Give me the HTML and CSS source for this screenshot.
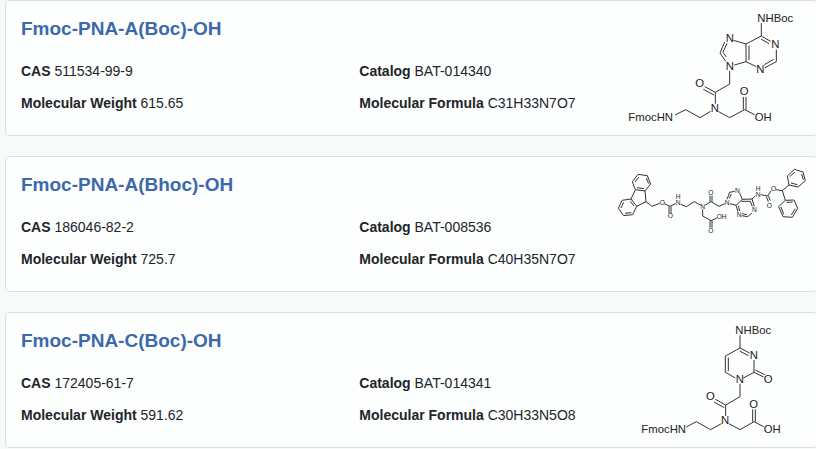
FILE: index.html
```
<!DOCTYPE html>
<html lang="en">
<head>
  <meta charset="UTF-8">
  <meta name="viewport" content="width=device-width, initial-scale=1.0">
  <title>PNA Monomers</title>
  <link rel="stylesheet" href="styles.css">
</head>
<body>

  <main class="product-list">
    <!-- Fmoc-PNA-A(Boc)-OH -->
    <article class="product">
      <div class="product-info">
        <h2><a href="#bat-014340">Fmoc-PNA-A(Boc)-OH</a></h2>
        <div class="product-data">
          <p><strong>CAS</strong> 511534-99-9</p>
          <p><strong>Catalog</strong> BAT-014340</p>
          <p><strong>Molecular Weight</strong> 615.65</p>
          <p><strong>Molecular Formula</strong> C31H33N7O7</p>
        </div>
      </div>
      <svg class="structure" viewBox="-9 3 612 402" role="img" aria-label="Structure of Fmoc-PNA-A(Boc)-OH">
        <path d="M436 69V108L390 132V185L421 200M436 108L464 124M435 117L459 131M399 137V180M390 132L353 121M326 126L312 159L329 184M333 130L321 157L331 171M390 185L355 195M447 203L481 185V149M445 194L473 178M341 212V252L298 277V311M298 277L266 260M294 285L262 268M284 334L252 353L209 329L177 345M308 335L341 353L386 329L416 344M382 329V291M390 329V291"/>
        <text x="424" y="66">NHBoc</text>
        <text x="329" y="127">N</text>
        <text x="466" y="143">N</text>
        <text x="329" y="210">N</text>
        <text x="421" y="219">N</text>
        <text x="238" y="262">O</text>
        <text x="371" y="286">O</text>
        <text x="284" y="336">N</text>
        <text x="416" y="363">OH</text>
        <text x="37" y="363">FmocHN</text>
      </svg>
    </article>

    <!-- Fmoc-PNA-A(Bhoc)-OH -->
    <article class="product">
      <div class="product-info">
        <h2><a href="#bat-008536">Fmoc-PNA-A(Bhoc)-OH</a></h2>
        <div class="product-data">
          <p><strong>CAS</strong> 186046-82-2</p>
          <p><strong>Catalog</strong> BAT-008536</p>
          <p><strong>Molecular Weight</strong> 725.7</p>
          <p><strong>Molecular Formula</strong> C40H35N7O7</p>
        </div>
      </div>
      <svg class="structure structure-small" viewBox="-9 6 612 402" role="img" aria-label="Structure of Fmoc-PNA-A(Bhoc)-OH">
        <!-- fluorenyl group -->
        <path d="M58 104L49 80L66 58L94 62L104 87L87 108ZM57 81L69 66M91 69L98 86M84 101L63 98"/>
        <path d="M45 132L18 136L7 160L23 182L50 179L62 154ZM23 142L15 159M27 175L46 173M54 153L43 139"/>
        <path d="M58 104L45 132M87 108L90 140L62 154M90 140L108 154L131 145"/>
        <!-- carbamate and backbone -->
        <path d="M145 146L162 154L179 146M159 154V175M165 154V175M194 148L211 155L235 140L253 150M268 150L285 140L309 154L326 146M282 140V122M288 140V122M260 163V183L285 197L303 189M282 197V218M288 197V218"/>
        <!-- adenine -->
        <path d="M333 133L341 112L356 109M340 130L346 117M371 114L379 133L360 151L342 146M379 133L408 132L415 154M376 139L403 139M360 151L366 170M367 152L371 168M377 182L395 185L408 174M379 176L393 179M408 132L418 123M409 154L403 139"/>
        <!-- benzhydryl ester -->
        <path d="M434 119L454 123L466 107M451 125L457 140M457 122L463 137M480 104L499 107L519 90M499 107L508 136"/>
        <path d="M519 90L514 63L535 43L561 51L568 77L546 96ZM521 65L537 51M557 57L562 74M544 89L525 84"/>
        <path d="M508 136L534 135L545 160L529 187L501 185L488 155ZM511 142L530 141M538 161L526 180M503 178L495 156"/>
        <text x="131" y="149">O</text>
        <text x="155" y="190">O</text>
        <text x="179" y="131">H</text>
        <text x="179" y="149">N</text>
        <text x="253" y="162">N</text>
        <text x="277" y="120">O</text>
        <text x="277" y="234">O</text>
        <text x="302" y="191">OH</text>
        <text x="326" y="149">N</text>
        <text x="357" y="115">N</text>
        <text x="362" y="187">N</text>
        <text x="408" y="172">N</text>
        <text x="419" y="107">H</text>
        <text x="419" y="125">N</text>
        <text x="465" y="109">O</text>
        <text x="452" y="158">O</text>
      </svg>
    </article>

    <!-- Fmoc-PNA-C(Boc)-OH -->
    <article class="product">
      <div class="product-info">
        <h2><a href="#bat-014341">Fmoc-PNA-C(Boc)-OH</a></h2>
        <div class="product-data">
          <p><strong>CAS</strong> 172405-61-7</p>
          <p><strong>Catalog</strong> BAT-014341</p>
          <p><strong>Molecular Weight</strong> 591.62</p>
          <p><strong>Molecular Formula</strong> C30H33N5O8</p>
        </div>
      </div>
      <svg class="structure" viewBox="-39 3 612 402" role="img" aria-label="Structure of Fmoc-PNA-C(Boc)-OH">
        <path d="M342 70V108L298 132V181L328 198M307 137V177M342 108L371 123M341 117L367 131M384 144V181L352 198M384 181L413 195M388 174L416 188M342 215V254L299 279V312M299 279L268 262M295 287L264 270M286 335L254 353L211 329L181 345M309 335L342 353L384 329L413 344M380 329V292M388 329V292"/>
        <text x="328" y="66">NHBoc</text>
        <text x="371" y="140">N</text>
        <text x="329" y="214">N</text>
        <text x="413" y="214">O</text>
        <text x="240" y="263">O</text>
        <text x="370" y="287">O</text>
        <text x="285" y="336">N</text>
        <text x="413" y="363">OH</text>
        <text x="46" y="363">FmocHN</text>
      </svg>
    </article>
  </main>

</body>
</html>
```
FILE: styles.css
```
* {
  margin: 0;
  padding: 0;
  box-sizing: border-box;
}

body {
  font-family: "Liberation Sans", Arial, sans-serif;
  font-size: 14px;
  color: #212529;
  background-color: #f8f9f9;
  overflow: hidden;
}

.product-list {
  display: flex;
  flex-direction: column;
  gap: 20px;
  margin-left: 5px;
  margin-right: -2px;
}

.product {
  display: flex;
  background-color: #fdfefe;
  border: 1px solid #dcdddd;
  border-radius: 5px;
}

.product-info {
  flex: 1;
  padding: 16px 0 16px 15px;
}

h2 {
  margin-bottom: 14px;
  font-size: 19px;
  line-height: 24px;
}

h2 a {
  color: #3c69ac;
  text-decoration: none;
}

h2 a:hover {
  text-decoration: underline;
}

.product-data {
  display: grid;
  grid-template-columns: 4fr 3fr;
  line-height: 32px;
}

.structure {
  flex: none;
  width: 204px;
  height: 134px;
}

.structure path {
  fill: none;
  stroke: #333;
  stroke-width: 3;
  stroke-linejoin: round;
}

.structure text {
  font-size: 34px;
  fill: #222;
}

.structure-small text {
  font-size: 20px;
}
```
